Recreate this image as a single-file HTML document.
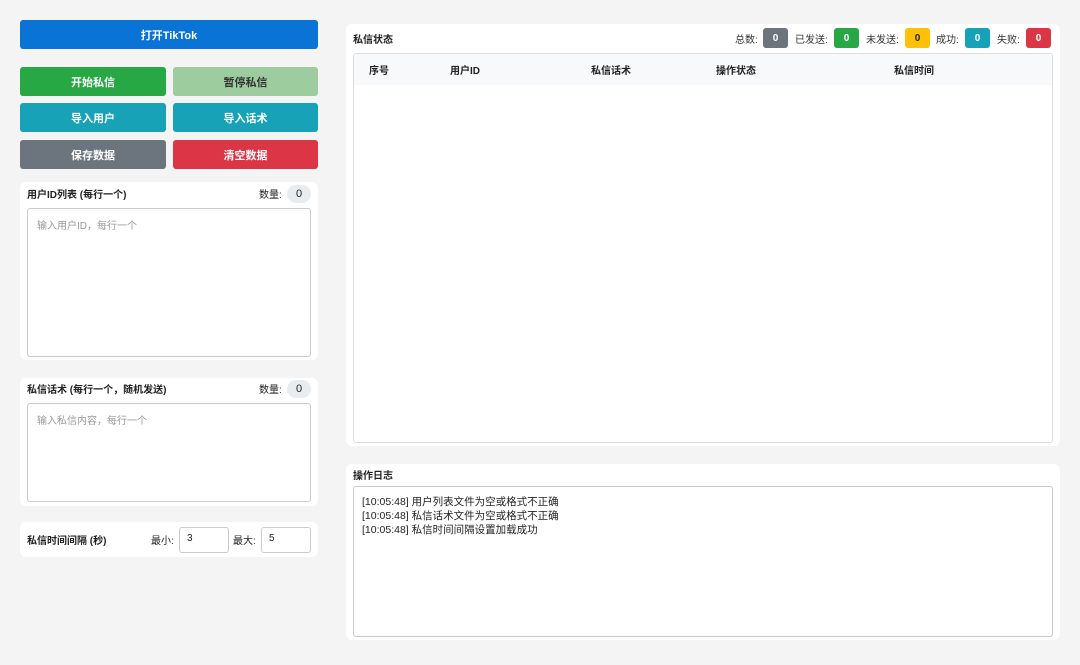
<!DOCTYPE html>
<html><head><meta charset="utf-8"><style>
*{box-sizing:border-box;margin:0;padding:0}
body{width:1080px;height:665px;background:#f4f4f4;font-family:"Liberation Sans","Noto Sans CJK SC",sans-serif;font-size:11px;color:#222;position:relative;overflow:hidden}
.a{position:absolute}
.btn{position:absolute;height:29px;border-radius:3px;color:#fff;font-weight:bold;font-size:11px;display:flex;align-items:center;justify-content:center}
.panel{position:absolute;background:#fff;border-radius:6px}
.t{position:absolute;font-weight:bold;font-size:10px}
.ta{position:absolute;border:1px solid #ccc;border-radius:3px;background:#fff;color:#999;font-size:10px;padding:8px 9px}
.cnt{position:absolute;height:18px;min-width:24px;border-radius:9px;background:#e9ecef;font-size:11px;display:flex;align-items:center;justify-content:center}
.bd{position:absolute;top:28px;width:25px;height:20px;border-radius:3px;color:#fff;font-weight:bold;font-size:10px;display:flex;align-items:center;justify-content:center}
.lb{position:absolute;top:31px;font-size:10px;color:#333}
.th{position:absolute;top:62px;font-weight:bold;font-size:10px}
</style></head><body>
<div class="btn" style="left:20px;top:20px;width:298px;background:#0a74d6">打开TikTok</div>
<div class="btn" style="left:20px;top:67px;width:146px;background:#28a745">开始私信</div>
<div class="btn" style="left:173px;top:67px;width:145px;background:#9dcd9f;color:#333">暂停私信</div>
<div class="btn" style="left:20px;top:103px;width:146px;background:#17a2b8">导入用户</div>
<div class="btn" style="left:173px;top:103px;width:145px;background:#17a2b8">导入话术</div>
<div class="btn" style="left:20px;top:140px;width:146px;background:#6c757d">保存数据</div>
<div class="btn" style="left:173px;top:140px;width:145px;background:#dc3545">清空数据</div>

<div class="panel" style="left:20px;top:182px;width:298px;height:178px"></div>
<div class="t" style="left:27px;top:186px">用户ID列表 (每行一个)</div>
<div class="a" style="left:259px;top:186px;font-size:10px">数量:</div>
<div class="cnt" style="left:287px;top:185px">0</div>
<div class="ta" style="left:27px;top:208px;width:284px;height:149px">输入用户ID，每行一个</div>

<div class="panel" style="left:20px;top:378px;width:298px;height:128px"></div>
<div class="t" style="left:27px;top:381px">私信话术 (每行一个，随机发送)</div>
<div class="a" style="left:259px;top:381px;font-size:10px">数量:</div>
<div class="cnt" style="left:287px;top:380px">0</div>
<div class="ta" style="left:27px;top:403px;width:284px;height:99px">输入私信内容，每行一个</div>

<div class="panel" style="left:20px;top:522px;width:298px;height:35px"></div>
<div class="t" style="left:27px;top:532px">私信时间间隔 (秒)</div>
<div class="a" style="left:151px;top:532px;font-size:10px">最小:</div>
<div class="ta" style="left:179px;top:527px;width:50px;height:26px;color:#222;padding:5px 7px">3</div>
<div class="a" style="left:233px;top:532px;font-size:10px">最大:</div>
<div class="ta" style="left:261px;top:527px;width:50px;height:26px;color:#222;padding:5px 7px">5</div>

<div class="panel" style="left:346px;top:24px;width:714px;height:422px"></div>
<div class="t" style="left:353px;top:31px">私信状态</div>
<div class="lb" style="left:735px">总数:</div><div class="bd" style="left:763px;background:#6c757d">0</div>
<div class="lb" style="left:795px">已发送:</div><div class="bd" style="left:834px;background:#28a745">0</div>
<div class="lb" style="left:866px">未发送:</div><div class="bd" style="left:905px;background:#ffc107;color:#222">0</div>
<div class="lb" style="left:936px">成功:</div><div class="bd" style="left:965px;background:#17a2b8">0</div>
<div class="lb" style="left:997px">失败:</div><div class="bd" style="left:1026px;background:#dc3545">0</div>
<div class="a" style="left:353px;top:53px;width:700px;height:390px;border:1px solid #ddd;border-radius:3px;background:#fff"></div>
<div class="a" style="left:354px;top:54px;width:698px;height:31px;background:#f8f9fa"></div>
<div class="th" style="left:369px">序号</div>
<div class="th" style="left:450px">用户ID</div>
<div class="th" style="left:591px">私信话术</div>
<div class="th" style="left:716px">操作状态</div>
<div class="th" style="left:894px">私信时间</div>

<div class="panel" style="left:346px;top:464px;width:714px;height:176px"></div>
<div class="t" style="left:353px;top:467px">操作日志</div>
<div class="a" style="left:353px;top:486px;width:700px;height:151px;border:1px solid #ccc;border-radius:3px;background:#fff;padding:8px 8px;font-size:10.5px;line-height:14px;color:#222">
[10:05:48] 用户列表文件为空或格式不正确<br>[10:05:48] 私信话术文件为空或格式不正确<br>[10:05:48] 私信时间间隔设置加载成功</div>
</body></html>
